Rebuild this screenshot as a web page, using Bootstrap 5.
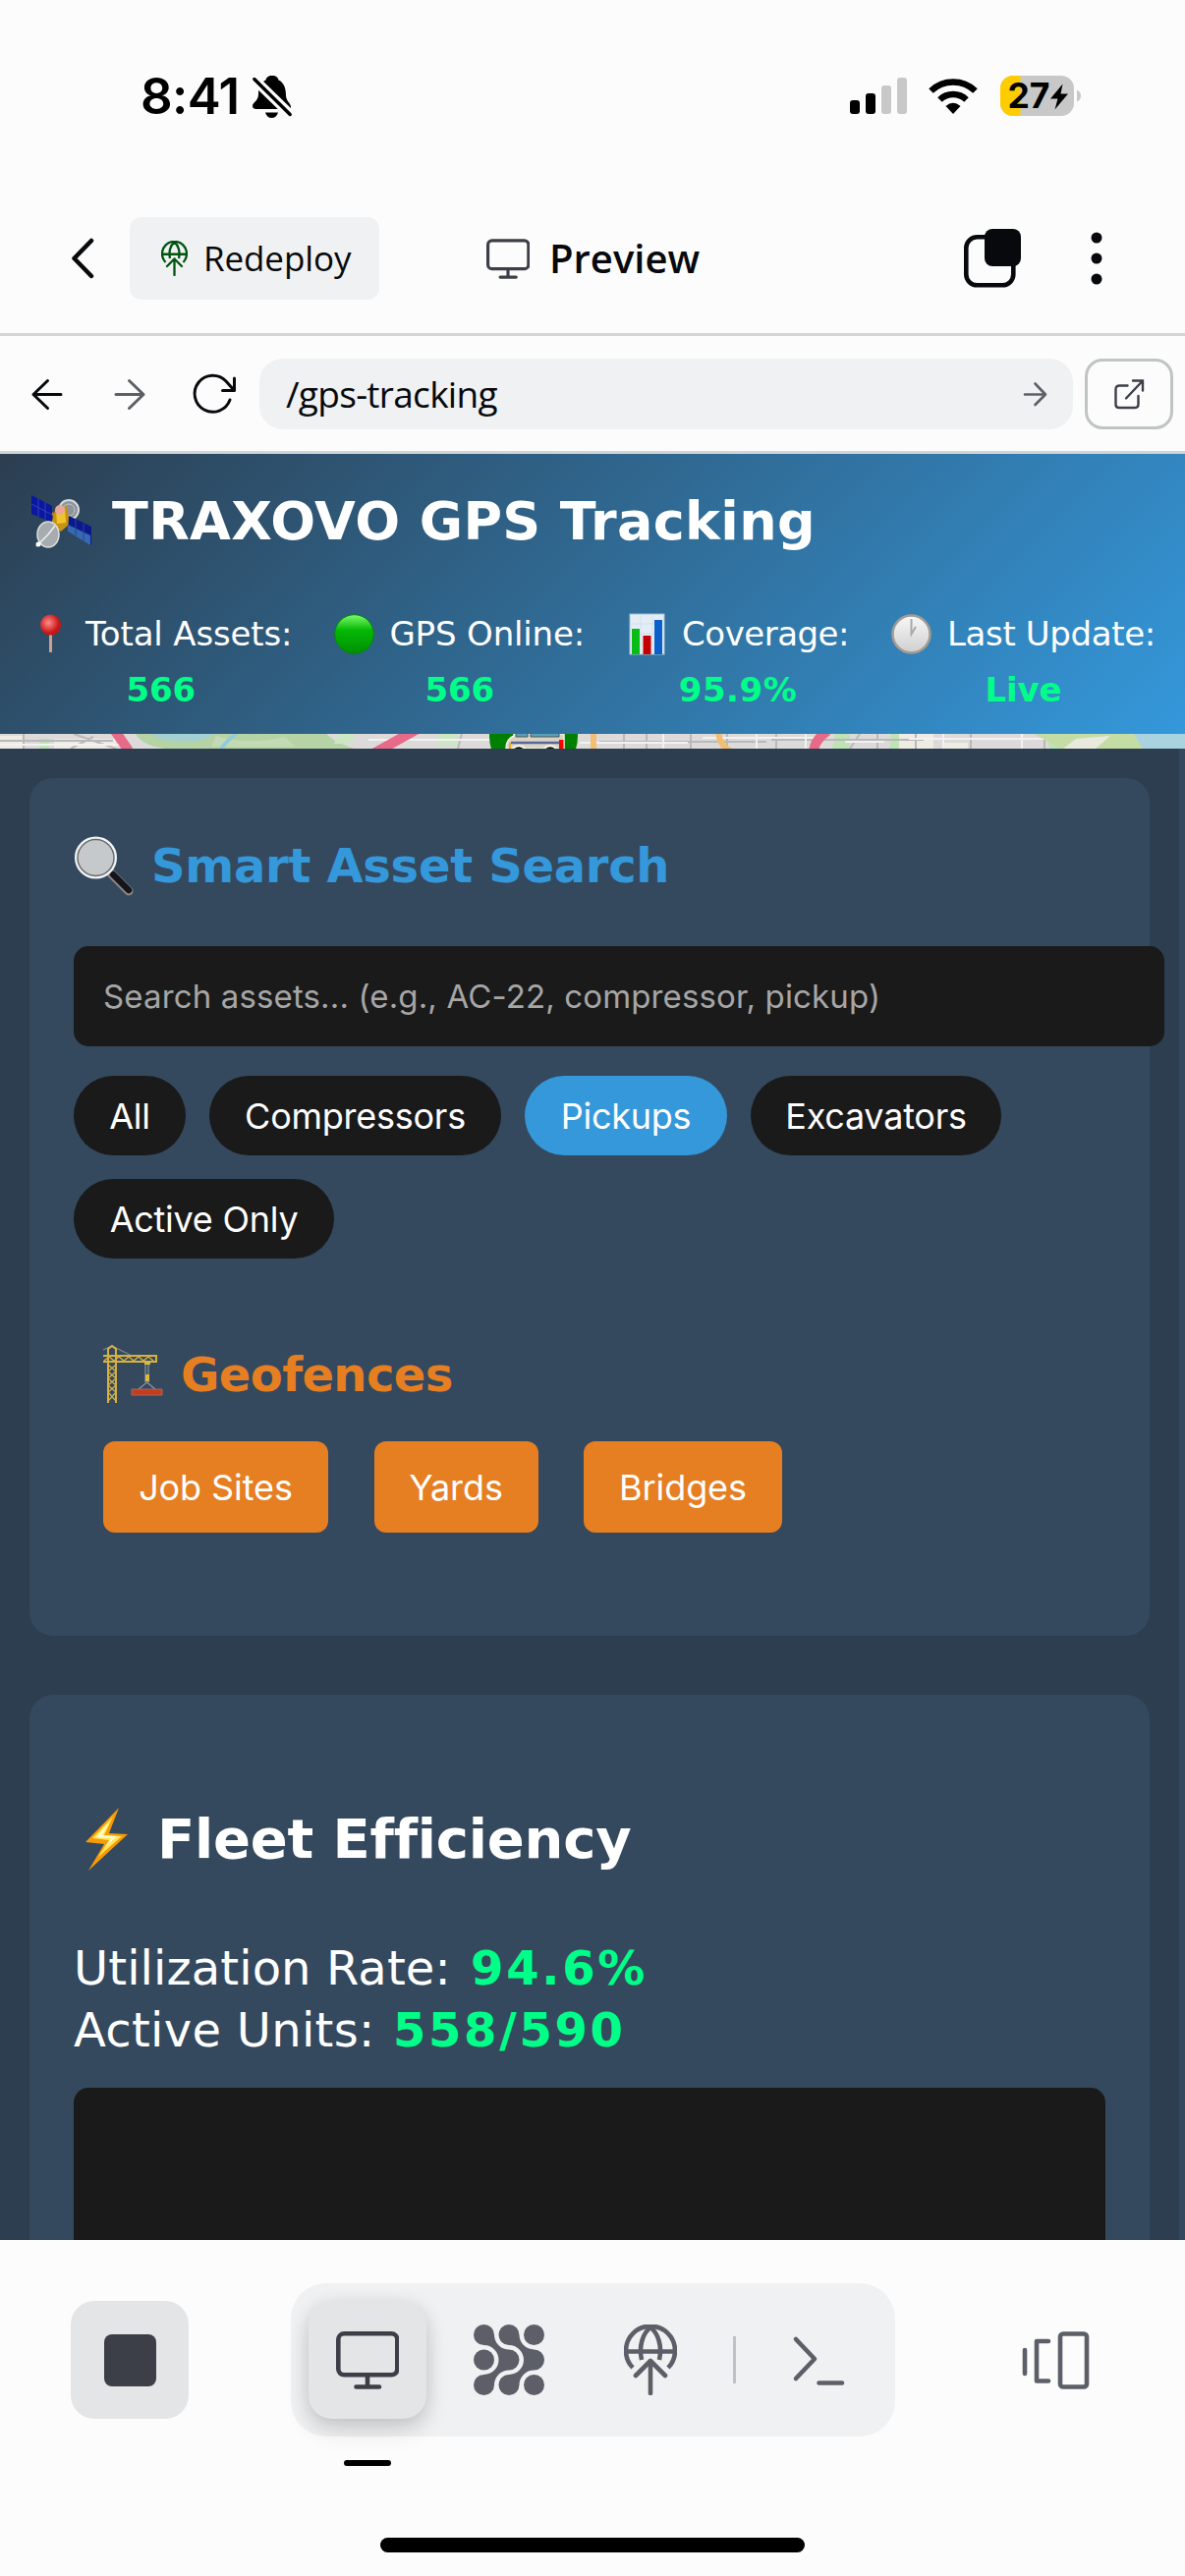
<!DOCTYPE html>
<html lang="en">
<head>
<meta charset="utf-8">
<meta name="viewport" content="width=device-width, initial-scale=1">
<title>TRAXOVO GPS Tracking</title>
<link href="https://cdn.jsdelivr.net/npm/bootstrap@5.3.0/dist/css/bootstrap.min.css" rel="stylesheet">
<style>
  body { width: 1206px; height: 2622px; overflow: hidden; background: #fcfcfc; color: #07090c; font-family: Inter, sans-serif; }
  svg { display: block; flex: none; overflow: visible; }
  .status-row { height: 196px; padding: 77px 106px 0 143px; }
  .clock { font-size: 51px; line-height: 41px; font-weight: 600; color: #000; letter-spacing: -.6px; }
  .batt { width: 82px; height: 41px; }
  .tool-row { height: 146px; padding: 25px 84px 0 73px; border-bottom: 3px solid #d4d5d5; }
  .plex { font-family: "Open Sans", sans-serif; }
  .btn-redeploy { height: 84px; width: 254px; background: #f0f1f3; border-radius: 12px; padding: 0 0 0 32px; font-size: 35px; color: #07090c; letter-spacing: -.1px; }
  .preview-title { font-size: 40px; font-weight: 600; }
  .nav-row { height: 120px; padding: 1px 12px 0 32px; border-bottom: 3px solid #d2d5d5; }
  .url-box { width: 828px; height: 72px; background: #f0f1f3; border-radius: 24px; padding: 0 27px; font-size: 37px; letter-spacing: -.7px; }
  .open-btn { width: 90px; height: 72px; border: 3px solid #c0c4c4; border-radius: 18px; background: #fcfcfc; padding: 0; }
  .viewport-pane { height: 1818px; background: #2c3e50; overflow: hidden; font-family: "DejaVu Sans", sans-serif; color: #fff; }
  .hero { height: 285px; background: linear-gradient(135deg, #2c3e50, #3498db); padding: 31px 30px 0; }
  .hero h1 { font-size: 54px; line-height: 76px; font-weight: 700; letter-spacing: .35px; }
  .stats { font-size: 34px; line-height: 57px; margin-top: 48px; letter-spacing: -.15px; }
  .tight { letter-spacing: -.5px; }
  .neon { color: #00ff88; font-weight: 700; }
  .map-strip { height: 15px; }
  .content-col { width: 1206px; height: 1518px; border-right: 6px solid #34495e; padding: 30px 30px 0; }
  .panel { background: #34495e; border-radius: 24px; padding-left: 45px; padding-right: 45px; }
  .panel-search { height: 873px; padding-top: 54px; }
  .panel h2 { font-size: 48px; line-height: 66px; font-weight: 700; letter-spacing: -.3px; }
  .search-box { width: 1110px; height: 102px; border: 0; border-radius: 15px; background: #1a1a1a; padding: 0 30px; font: 33px Inter, sans-serif; color: #fff; letter-spacing: .14px; }
  .search-box::placeholder { color: #a6a6a6; opacity: 1; }
  .chip { height: 81px; border: 0; background: #1a1a1a; color: #fff; font: 36px Inter, sans-serif; letter-spacing: -.25px; padding: 0; white-space: nowrap; }
  .chip-on { background: #3498db; }
  .fence { height: 93px; border: 0; background: #e67e22; color: #fff; font: 36px Inter, sans-serif; letter-spacing: -.1px; border-radius: 12px; padding: 0; }
  .panel-fleet { height: 700px; margin-top: 60px; padding-top: 108px; }
  .panel-fleet h2 { font-size: 56px; line-height: 78px; letter-spacing: -.2px; }
  .fleet-lines { font-size: 48px; line-height: 63px; margin-top: 61px; letter-spacing: .1px; }
  .fleet-lines .neon { letter-spacing: 2.700px; }
  .chart-box { height: 300px; background: #1a1a1a; border-radius: 15px; margin-top: 27px; }
  .dock { height: 342px; background: #fcfcfc; padding: 44px 97px 0 72px; }
  .dock-row { height: 156px; }
  .dock-tile { width: 120px; height: 120px; border-radius: 24px; background: #e4e5e6; border: 0; padding: 0; }
  .dock-active { box-shadow: 0 12px 24px rgba(0,0,0,.12), 0 3px 18px rgba(0,0,0,.1); }
  .dock-group { width: 615px; height: 156px; border-radius: 36px; background: #f0f1f3; padding: 0 18px; margin-left: 104px; }
  .dock-sep { width: 3px; height: 48px; background: #c0c1c4; }
  .tab-mark { width: 48px; height: 6px; border-radius: 3px; background: #000; margin: 24px 0 0 278px; }
  .home-bar { width: 432px; height: 15px; border-radius: 8px; background: #000; margin: 73px 0 0 315px; }
  .t { white-space: pre; display: inline-block; }
</style>
</head>
<body class="d-flex flex-column">
<svg width="0" height="0" class="position-absolute" aria-hidden="true">
  <defs>
    <symbol id="globe" viewBox="0 0 54 72"><g fill="none" stroke="currentColor" stroke-width="4.6">
      <path d="M9 44A25 25 0 1 1 45 44M2 27.500H52"/><path d="M18 36C15 22 19 9 27 3C35 9 39 22 36 36"/>
      <path d="M12 52L27 37L42 52M27 37V70" stroke-linecap="round" stroke-linejoin="round"/></g></symbol>
    <symbol id="monitor" viewBox="0 0 64 59"><g fill="none" stroke="currentColor" stroke-width="4.600" stroke-linecap="round"><rect x="2.300" y="2.300" width="60" height="42" rx="6"/><path d="M32 45V56M20.500 56.500H44"/></g></symbol>
    <radialGradient id="redg" cx=".4" cy=".4"><stop offset="0" stop-color="#ff8d8d"/><stop offset="1" stop-color="#c81414"/></radialGradient>
    <linearGradient id="greeng" x2="0" y2="1"><stop offset="0" stop-color="#7dfb6b"/><stop offset=".4" stop-color="#05b805"/><stop offset="1" stop-color="#008f00"/></linearGradient>
    <linearGradient id="silver" x2="0" y2="1"><stop offset="0" stop-color="#f8f8f8"/><stop offset="1" stop-color="#cfcfcf"/></linearGradient>
  </defs>
</svg>

<div class="status-row d-flex justify-content-between align-items-start">
  <div class="d-flex">
    <span class="clock t">8:41</span>
    <svg width="40" height="43" viewBox="0 0 40 43" style="margin-left:14px"><path d="M20 0C24 0 26 2 26.500 4.500C32 7 34 13 34 20C34 26 39 28 39 32Q39 34 36 34H4Q0 34 0 31C0 27 6 26 6 19C6 12 8 7 13.500 4.500C14 2 16 0 20 0ZM13 37.500H26C25 41 23 43 19.500 43S14 41 13 37.500Z"/><path d="M1.500 3.500L38.500 39.500" stroke="#fcfcfc" stroke-width="10"/><path d="M1.800 3.500L38.200 39.500" stroke="#000" stroke-width="3.400" stroke-linecap="round"/></svg>
  </div>
  <div class="d-flex align-items-start">
    <svg width="58" height="41" viewBox="0 0 58 41"><g fill="#000"><rect y="25" width="10" height="14" rx="3"/><rect x="16" y="18" width="10" height="21" rx="3"/></g><g fill="#c8c8c8"><rect x="32" y="10" width="10" height="29" rx="3"/><rect x="48" y="2" width="10" height="37" rx="3"/></g></svg>
    <svg width="50" height="41" viewBox="0 0 50 41" style="margin:0 23px 0 22px"><g fill="none" stroke="#000" stroke-width="6.500"><path d="M2.500 15.500A32.500 32.500 0 0 1 47.500 15.500"/><path d="M11.500 24.500A19.500 19.500 0 0 1 38.500 24.500"/></g><path d="M25 39L17.500 31Q25 24.500 32.500 31Z"/></svg>
    <svg class="batt" viewBox="0 0 82 41"><clipPath id="bc"><rect width="75" height="41" rx="13"/></clipPath><g clip-path="url(#bc)"><rect width="75" height="41" fill="#c8c8c8"/><rect width="20.500" height="41" fill="#ffcc00"/></g><path d="M78 14.500Q82 16.500 82 20.500T78 26.500Z" fill="#c8c8c8"/><text x="7.500" y="33.300" font-family="Inter, sans-serif" font-weight="700" font-size="35.500" textLength="43" lengthAdjust="spacingAndGlyphs">27</text><path d="M63.500 8.500L51 23.500H58.500L55.500 34.500L69 18.500H61.500Z"/></svg>
  </div>
</div>

<header class="tool-row d-flex align-items-start">
  <div class="d-flex align-items-center w-100" style="height:84px">
    <svg width="22" height="40" viewBox="0 0 22 40"><path d="M20 2L2.500 20L20 38" fill="none" stroke="#07090c" stroke-width="4.500" stroke-linecap="round" stroke-linejoin="round"/></svg>
    <button class="btn btn-redeploy border-0 plex d-flex align-items-center" style="margin-left:37px"><svg width="27" height="36" color="#00540f"><use href="#globe"/></svg><span class="t" style="margin-left:16px">Redeploy</span></button>
    <svg width="44" height="41" color="#3c3f47" style="margin-left:109px"><use href="#monitor"/></svg>
    <span class="plex preview-title t" style="margin-left:20px">Preview</span>
    <svg class="ms-auto" width="58" height="60" viewBox="0 0 58 60"><rect x="2.300" y="8.300" width="48" height="49" rx="11" fill="none" stroke="#07090c" stroke-width="4.600"/><rect x="21" width="37" height="38" rx="8" fill="#07090c"/></svg>
    <svg width="12" height="54" viewBox="0 0 12 54" style="margin-left:71px"><g fill="#07090c"><circle cx="6" cy="6" r="5.500"/><circle cx="6" cy="27" r="5.500"/><circle cx="6" cy="48" r="5.500"/></g></svg>
  </div>
</header>

<nav class="nav-row d-flex align-items-center">
  <svg width="31" height="31" viewBox="0 0 31 31"><path d="M16.500 1.500L2 15.500L16.500 29.500M2 15.500H30" fill="none" stroke="#07090c" stroke-width="3" stroke-linecap="round" stroke-linejoin="round"/></svg>
  <svg width="31" height="31" viewBox="0 0 31 31" style="margin-left:54px"><path d="M14.500 1.500L29 15.500L14.500 29.500M29 15.500H1" fill="none" stroke="#5c5f66" stroke-width="3" stroke-linecap="round" stroke-linejoin="round"/></svg>
  <svg width="43" height="40" viewBox="0 0 43 40" style="margin-left:49px"><path d="M37 26A18.500 18.500 0 1 1 33 7L41 16M41.500 4V16.500H29.500" fill="none" stroke="#07090c" stroke-width="3" stroke-linecap="round" stroke-linejoin="round"/></svg>
  <div class="url-box plex d-flex align-items-center justify-content-between" style="margin-left:24px"><span class="t">/gps-tracking</span><svg width="23" height="25" viewBox="0 0 23 25"><path d="M11.500 1.500L22 12.500L11.500 23M22 12.500H1" fill="none" stroke="#5c5f66" stroke-width="2.600" stroke-linecap="round" stroke-linejoin="round"/></svg></div>
  <button class="open-btn d-flex align-items-center justify-content-center ms-auto"><svg width="30" height="31" viewBox="0 0 30 31"><path d="M13.500 6.500H5.500Q1.500 6.500 1.500 10V25.500Q1.500 29 5 29H20.500Q24.500 29 24.500 25.500V17M12 19.500L29 1.500M19 1.500H29V11.500" fill="none" stroke="#3c3f47" stroke-width="2.400" stroke-linecap="round"/></svg></button>
</nav>

<main class="viewport-pane">
  <section class="hero">
    <h1 class="d-flex align-items-center m-0">
      <svg width="64" height="60" viewBox="0 0 64 60"><g transform="translate(2,1)"><circle cx="38" cy="17" r="10" fill="#8d949b" stroke="#d7dadd" stroke-width="2"/><circle cx="38" cy="17" r="6" fill="none" stroke="#c3c8cb"/><path d="M20 20L42 34" stroke="#a8813c" stroke-width="3"/><path d="M0 2L21 13V30L0 21Z" fill="#0b179e"/><path d="M0 11L21 22M7 6V24M14 9V27" stroke="#3042bb"/><path d="M24 17L36 13L39 31L30 39L20 32Z" fill="#c99312"/><path d="M25 17L34 15L35 30L26 31Z" fill="#f0c52b"/><circle cx="29" cy="17" r="5" fill="#eaa59c"/><path d="M38 23L61 34V53L37 39Z" fill="#0a1a8c"/><path d="M37 32L60 43V53L37 39Z" fill="#3869ae"/><path d="M45 27V43M53 31V48" stroke="#2b409c"/><ellipse cx="17" cy="42" rx="11" ry="13" fill="#a6acb0" stroke="#dcdfe0" stroke-width="1.500"/><path d="M17 42L5 54M17 42L24 33" stroke="#eee" stroke-width="1.500"/><circle cx="7" cy="52" r="2.500" fill="#fff"/></g></svg>
      <span class="t" style="margin-left:20px">TRAXOVO GPS Tracking</span></h1>
    <div class="stats d-flex justify-content-between text-center">
      <div><div class="d-flex align-items-center"><svg width="41" height="41" viewBox="0 0 41 41" style="margin-right:16px"><path d="M21.500 16V39" stroke="#c9a18d" stroke-width="3"/><circle cx="21.500" cy="11" r="10.500" fill="url(#redg)"/></svg><span class="t">Total Assets:</span></div><div class="neon"><span class="t">566</span></div></div>
      <div><div class="d-flex align-items-center"><svg width="41" height="41" viewBox="0 0 41 41" style="margin-right:15px"><circle cx="20.500" cy="20.500" r="19.800" fill="url(#greeng)" stroke="#008a0a"/></svg><span class="t">GPS Online:</span></div><div class="neon"><span class="t">566</span></div></div>
      <div><div class="d-flex align-items-center"><svg width="41" height="41" viewBox="0 0 41 41" style="margin-right:15px"><rect x="3" width="35" height="41" fill="#e4edf6" stroke="#a9c0d2"/><path d="M3 10H38M3 20H38M3 30H38M14 0V41M26 0V41" stroke="#cfe0ee"/><rect x="5" y="15" width="8" height="26" fill="#07bd15"/><rect x="16.500" y="22" width="8" height="19" fill="#c40000"/><rect x="28" y="6" width="8" height="35" fill="#0960cb"/></svg><span class="t tight">Coverage:</span></div><div class="neon"><span class="t" style="letter-spacing:.5px">95.9%</span></div></div>
      <div><div class="d-flex align-items-center"><svg width="41" height="41" viewBox="0 0 41 41" style="margin-right:16px"><circle cx="20.500" cy="20.500" r="19" fill="url(#silver)" stroke="#a49b92" stroke-width="2.500"/><path d="M20.500 5V20.500L25 13" fill="none" stroke="#a9a9a9" stroke-width="2"/></svg><span class="t" style="letter-spacing:-.35px">Last Update:</span></div><div class="neon"><span class="t">Live</span></div></div>
    </div>
  </section>

  <svg class="map-strip" width="1206" height="15" viewBox="0 0 1206 15">
    <clipPath id="mc"><rect width="1206" height="15"/></clipPath>
    <g clip-path="url(#mc)">
      <rect width="1206" height="15" fill="#dcdbd9"/>
      <path d="M0 2H24V15H0ZM55 5H118V15H55ZM910 0H950V15H905ZM960 9H985V15H960ZM1080 5H1120V15H1075Z" fill="#eeece3"/>
      <path d="M138 0H332L342 8L360 15H168Q145 12 138 0Z" fill="#b5d3a4"/><path d="M155 0H220Q200 11 180 7Q160 7 155 0Z" fill="#a4d0d2"/><path d="M220 2Q250 12 290 3L300 13H215Z" fill="#c3dbb4"/>
      <path d="M850 0H865V15H847ZM907 0H915V15H905ZM1065 0H1085V15H1068ZM40 5H50V15H40Z" fill="#bfe3b5"/><path d="M345 0H360V10H340ZM446 0H465V12H446Z" fill="#cde6c3"/>
      <path d="M240 0Q230 8 225 15" fill="none" stroke="#92cbd9" stroke-width="4"/>
      <g stroke="#b9b9b9" stroke-width="2" fill="none"><path d="M0 7H115M24 0V15M75 0L118 15M95 3L72 15M470 0L466 15M610 8H780M635 0V15M658 0V15M703 0V15M740 0V15M785 6H940M790 0V15M865 15L875 0M893 0V15M932 0V15M988 0V15M1025 5H1120M1063 0V15M1094 0V15"/></g>
      <g stroke="#f2f2f2" stroke-width="2" fill="none"><path d="M0 11H130M375 6H500M590 9H700M715 4H840M860 8H900M925 5H1080M675 0V15M770 0V15M820 0V15M960 0V15M1040 0V15"/></g>
      <path d="M117 -3L131 17M380 20L425 -5M842 -3Q826 9 829 20" fill="none" stroke="#e76b89" stroke-width="10"/>
      <path d="M604 0V15M731 -3Q732 13 745 18" fill="none" stroke="#f4bd72" stroke-width="6"/>
      <path d="M1052 0H1155L1165 15H1080Z" fill="#c4dda5"/><path d="M1095 5L1130 2L1115 15H1082Z" fill="#e9eadd"/><path d="M1154 0H1206V15H1163Z" fill="#a9d3df"/>
      <circle cx="543" cy="2" r="45" fill="#008000"/>
      <path d="M515 15Q515 5 523 2V0H574V15Z" fill="#d9d5c5" stroke="#f6f2e4" stroke-width="1.500"/><path d="M525 -1H537V3H525ZM540 -1H569V3H540Z" fill="#5aa0bd" stroke="#555"/><path d="M520 9H570" stroke="#5a6699" stroke-width="2.500"/><path d="M569 6H573.500V15H569Z" fill="#f00"/><circle cx="528" cy="20" r="8" fill="#111" stroke="#f5f0dd" stroke-width="2.500"/><circle cx="560" cy="20" r="8" fill="#111" stroke="#f5f0dd" stroke-width="2.500"/><path d="M519 9V15" stroke="#f5a623" stroke-width="2"/>
    </g>
  </svg>

  <div class="content-col">
    <section class="panel panel-search">
      <h2 class="d-flex align-items-center m-0" style="color:#3498db"><svg width="60" height="60" viewBox="0 0 60 60"><path d="M38 39L56 57" stroke="#8b8480" stroke-width="9" stroke-linecap="round"/><path d="M40 40L56 56" stroke="#15151b" stroke-width="6.500" stroke-linecap="round"/><circle cx="22.500" cy="23" r="19.800" fill="#c5c9cc" stroke="#eef4f8" stroke-width="3.500"/><circle cx="22.500" cy="23" r="18.500" fill="none" stroke="#6f6a68" stroke-width="1.500"/></svg><span class="t" style="margin-left:19px;padding-top:2px">Smart Asset Search</span></h2>
      <input class="search-box d-block" style="margin-top:49px" placeholder="Search assets... (e.g., AC-22, compressor, pickup)">
      <div class="d-flex flex-wrap" style="gap:24px;margin-top:30px">
        <button class="chip rounded-pill" style="width:114px"><span class="t">All</span></button>
        <button class="chip rounded-pill" style="width:297px"><span class="t">Compressors</span></button>
        <button class="chip chip-on rounded-pill" style="width:206px"><span class="t">Pickups</span></button>
        <button class="chip rounded-pill" style="width:255px"><span class="t">Excavators</span></button>
        <button class="chip rounded-pill" style="width:265px"><span class="t">Active Only</span></button>
      </div>
      <div style="padding:85px 30px 0">
        <h2 class="d-flex align-items-center m-0" style="color:#e67e22"><svg width="62" height="60" viewBox="0 0 62 60"><g fill="none"><path d="M0 5L9 1L31 12" stroke="#7d8790" stroke-width="1.300"/><path d="M5 59V4L9 1L13 4V59M0 11H54V17H0" stroke="#d6b13f" stroke-width="2"/><path d="M5 20L13 27L5 34L13 41L5 48L13 57M13 20L5 27L13 34L5 41L13 48L5 57M1 16L6 12L11 16L16 12L21 16L26 12L31 16L36 12L41 16L46 12L51 16" stroke="#cfae4a" stroke-width="1.400"/><path d="M43 18V38M46 18V38M44.500 38L36 45M44.500 38L53 45" stroke="#8f979d" stroke-width="1.200"/></g><rect x="42" y="16" width="6" height="4" fill="#ddb83d"/><rect x="43" y="30" width="4" height="7" fill="#ddb83d"/><path d="M29 45H60V51H29Z" fill="#c93b1d" stroke="#a06b5e"/></svg><span class="t" style="margin-left:17px;letter-spacing:-.6px">Geofences</span></h2>
        <div class="d-flex" style="gap:46.500px;margin-top:35px">
          <button class="fence" style="width:229px"><span class="t">Job Sites</span></button>
          <button class="fence" style="width:167px"><span class="t">Yards</span></button>
          <button class="fence" style="width:202px"><span class="t">Bridges</span></button>
        </div>
      </div>
    </section>

    <section class="panel panel-fleet">
      <h2 class="d-flex align-items-center m-0"><svg width="66" height="64" viewBox="0 0 66 64"><path d="M46 0L12 35L31 37L15 64L55 27L36 26Z" fill="#f79b04"/><path d="M40 9L19 31L36 33L25 50L49 29L31 28Z" fill="#ffe65a"/><path d="M37 14L23 30L38 31L31 41L44 29L29 28Z" fill="#fffbd0"/></svg><span class="t" style="margin-left:19px">Fleet Efficiency</span></h2>
      <div class="fleet-lines">
        <div><span class="t">Utilization Rate:</span> <span class="neon t" style="margin-left:5px">94.6%</span></div>
        <div><span class="t" style="letter-spacing:.3px">Active Units:</span> <span class="neon t" style="margin-left:3px">558/590</span></div>
      </div>
      <div class="chart-box"></div>
    </section>
  </div>
</main>

<footer class="dock">
  <div class="dock-row d-flex align-items-center">
    <button class="dock-tile d-flex align-items-center justify-content-center"><svg width="53" height="53"><rect width="53" height="53" rx="8" fill="#3c3f47"/></svg></button>
    <div class="dock-group d-flex align-items-center" style="color:#5c5f67">
      <button class="dock-tile dock-active d-flex align-items-center justify-content-center" style="color:#3c3f47"><svg width="64" height="59"><use href="#monitor"/></svg></button>
      <svg width="72" height="72" viewBox="0 0 72 72" fill="currentColor" style="margin-left:48px"><path id="agentlink" d="M10.500 0A10.500 10.500 0 0 1 21 10.500A15 15 0 0 0 36 25.500A10.500 10.500 0 0 1 36 46.500A15 15 0 0 0 21 61.500A10.500 10.500 0 1 1 10.500 51A15 15 0 0 0 10.500 21A10.500 10.500 0 0 1 10.500 0Z"/><use href="#agentlink" x="25.500"/><circle cx="10.500" cy="36" r="10.500"/><circle cx="61.500" cy="10.500" r="10.500"/><circle cx="61.500" cy="61.500" r="10.500"/></svg>
      <svg width="54" height="72" style="margin-left:81px"><use href="#globe"/></svg>
      <div class="dock-sep" style="margin-left:57px"></div>
      <svg width="54" height="56" viewBox="0 0 54 56" style="margin-left:57px"><path d="M4 7L23 27L4 47M27.500 51.500H51" fill="none" stroke="currentColor" stroke-width="4.600" stroke-linecap="round" stroke-linejoin="round"/></svg>
    </div>
    <svg class="ms-auto" width="69" height="59" viewBox="0 0 69 59"><g fill="none" stroke="#5c5f67" stroke-width="4.600" stroke-linecap="round" stroke-linejoin="round"><path d="M3 19V43M27 10H15V50.500H27"/><rect x="39" y="2.500" width="27" height="54" rx="3"/></g></svg>
  </div>
  <div class="tab-mark"></div>
  <div class="home-bar"></div>
</footer>
<script src="https://cdn.jsdelivr.net/npm/bootstrap@5.3.0/dist/js/bootstrap.bundle.min.js"></script>
</body>
</html>
